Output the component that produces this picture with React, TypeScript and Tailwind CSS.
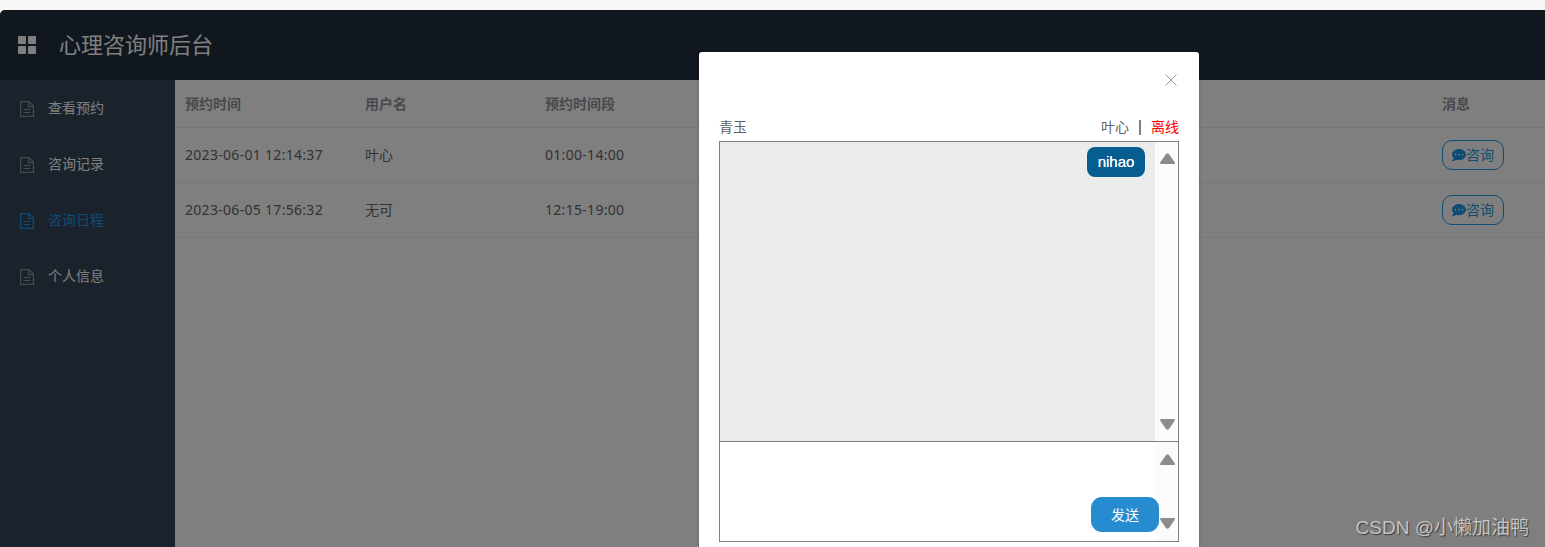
import React from "react";
import { FaCommentDots } from "react-icons/fa";

const font = "font-['Liberation_Sans','Noto_Sans_CJK_SC',sans-serif]";
const digits = "font-['Noto_Sans','Noto_Sans_CJK_SC',sans-serif] tracking-[0.3px]";

function DocIcon({ className }: { className: string }) {
  return (
    <svg viewBox="0 0 14 16" className={`h-4 w-3.5 ${className}`} fill="none" stroke="currentColor" strokeWidth="1.2" strokeLinejoin="round">
      <path d="M.6.6h8.5l4.3 4.3v10.5H.6z" />
      <path d="M8.6.6v4.9h4.8" />
      <path d="M3.5 8.5h7M3.5 11.5h7" />
    </svg>
  );
}

function Arrow({ down }: { down?: boolean }) {
  return (
    <svg viewBox="0 0 15 11" className="h-[11px] w-[15px] text-[#8c8c8c]" fill="currentColor">
      <path
        d={down ? "M1.2 0h12.6c.9 0 1.4 1 .9 1.7L9 9.9c-.8 1.1-2.2 1.1-3 0L.3 1.7C-.2 1 .3 0 1.2 0z" : "M1.2 11h12.6c.9 0 1.4-1 .9-1.7L9 1.1C8.2 0 6.8 0 6 1.1L.3 9.3C-.2 10 .3 11 1.2 11z"}
      />
    </svg>
  );
}

function ScrollTrack({ className }: { className: string }) {
  return (
    <div className={`flex w-[23px] shrink-0 flex-col items-center justify-between bg-[#fbfbfb] pl-px ${className}`}>
      <Arrow />
      <Arrow down />
    </div>
  );
}

const nav = [
  { label: "查看预约" },
  { label: "咨询记录" },
  { label: "咨询日程", active: true },
  { label: "个人信息" },
];

const rows = [
  { time: "2023-06-01 12:14:37", user: "叶心", slot: "01:00-14:00" },
  { time: "2023-06-05 17:56:32", user: "无可", slot: "12:15-19:00" },
];

export default function App() {
  return (
    <div className={`relative h-[547px] w-[1545px] overflow-hidden bg-[#f7f7f7] pt-[10px] ${font}`}>
      <div className="flex h-[537px] flex-col overflow-hidden rounded-tl-[5px] bg-white">
        <header className="flex h-[70px] shrink-0 items-center bg-[#222f3e] pl-[18px]">
          <svg viewBox="0 0 18 18" className="h-[18px] w-[18px] text-[#ffffff]" fill="currentColor">
            <rect x="0" y="0" width="8" height="8" rx="1" />
            <rect x="10" y="0" width="8" height="8" rx="1" />
            <rect x="0" y="10" width="8" height="8" rx="1" />
            <rect x="10" y="10" width="8" height="8" rx="1" />
          </svg>
          <h1 className="ml-[23px] text-[22px] font-normal text-[#ffffff]">心理咨询师后台</h1>
        </header>
        <div className="flex min-h-0 flex-1">
          <aside className="w-[175px] shrink-0 bg-[#344558]">
            {nav.map((n) => (
              <div
                key={n.label}
                className={`flex h-14 items-center pl-5 text-sm ${n.active ? "text-[#1c98e6]" : "text-white"}`}
              >
                <DocIcon className={`mt-0.5 ${n.active ? "text-[#1c98e6]" : "text-[#8f949b]"}`} />
                <span className="ml-3.5">{n.label}</span>
              </div>
            ))}
          </aside>
          <main className="min-w-0 flex-1 bg-white text-sm text-[#666666]">
            <div className="flex h-[48px] items-center border-b border-[#ebeef5] pl-[10px] font-bold text-[#909399]">
              <span className="w-[180px]">预约时间</span>
              <span className="w-[180px]">用户名</span>
              <span className="w-[180px]">预约时间段</span>
              <span className="ml-auto w-[103px]">消息</span>
            </div>
            {rows.map((r) => (
              <div key={r.time} className="flex h-[55px] items-center border-b border-[#ebeef5] pl-[10px]">
                <span className={`w-[180px] ${digits}`}>{r.time}</span>
                <span className="w-[180px]">{r.user}</span>
                <span className={`w-[180px] ${digits}`}>{r.slot}</span>
                <div className="ml-auto w-[103px]">
                  <button className="flex h-[30px] w-[62px] items-center justify-center rounded-[10px] border border-[#1c98e6] text-sm text-[#1c98e6]">
                    <FaCommentDots className="h-[14px] w-[14px]" />
                    咨询
                  </button>
                </div>
              </div>
            ))}
          </main>
        </div>
      </div>

      <div className="absolute inset-x-0 top-[10px] bottom-0 rounded-tl-[5px] bg-black/50" />

      <div className="absolute top-[52px] left-[699px] h-[520px] w-[500px] rounded-[3px] bg-white px-5 shadow-[0_1px_3px_rgba(0,0,0,0.3)]">
        <div className="flex h-[64px] items-start justify-end pt-[22px]">
          <svg viewBox="0 0 12 12" className="mr-[2px] h-3 w-3 text-[#909399]" fill="none" stroke="currentColor" strokeWidth="1">
            <path d="M.5.5l11 11M11.5.5l-11 11" />
          </svg>
        </div>
        <div className="flex h-[25px] items-center justify-between pb-[3px] text-sm text-[#606266]">
          <span>青玉</span>
          <div className="flex items-center">
            <span>叶心</span>
            <span className="mx-[10px] h-[15px] w-0.5 bg-[#808080]" />
            <span className="text-[#ff0000]">离线</span>
          </div>
        </div>
        <div className="h-[401px] border border-[#808080]">
          <div className="flex h-[299px]">
            <div className="flex flex-1 items-start justify-end bg-[#ececec] pt-[5px] pr-[10px]">
              <span className="flex h-[30px] w-[58px] items-center justify-center rounded-[8px] bg-[#055d90] pt-px text-[15px] text-white [text-shadow:0_0_0.6px_#ffffff]">
                nihao
              </span>
            </div>
            <ScrollTrack className="py-[11px]" />
          </div>
          <div className="relative flex h-[100px] border-t border-[#808080]">
            <div className="flex-1" />
            <ScrollTrack className="py-[12px]" />
            <button className="absolute top-[55px] right-[19px] flex h-[35px] w-[68px] items-center justify-center rounded-[11px] bg-[#268ccf] text-sm text-white">
              发送
            </button>
          </div>
        </div>
      </div>

      <div className="absolute right-[16px] bottom-[7px] text-[19px] leading-6 text-[#c4c4c4] [text-shadow:1px_1px_1px_rgba(0,0,0,0.55)]">
        CSDN @小懒加油鸭
      </div>
    </div>
  );
}
